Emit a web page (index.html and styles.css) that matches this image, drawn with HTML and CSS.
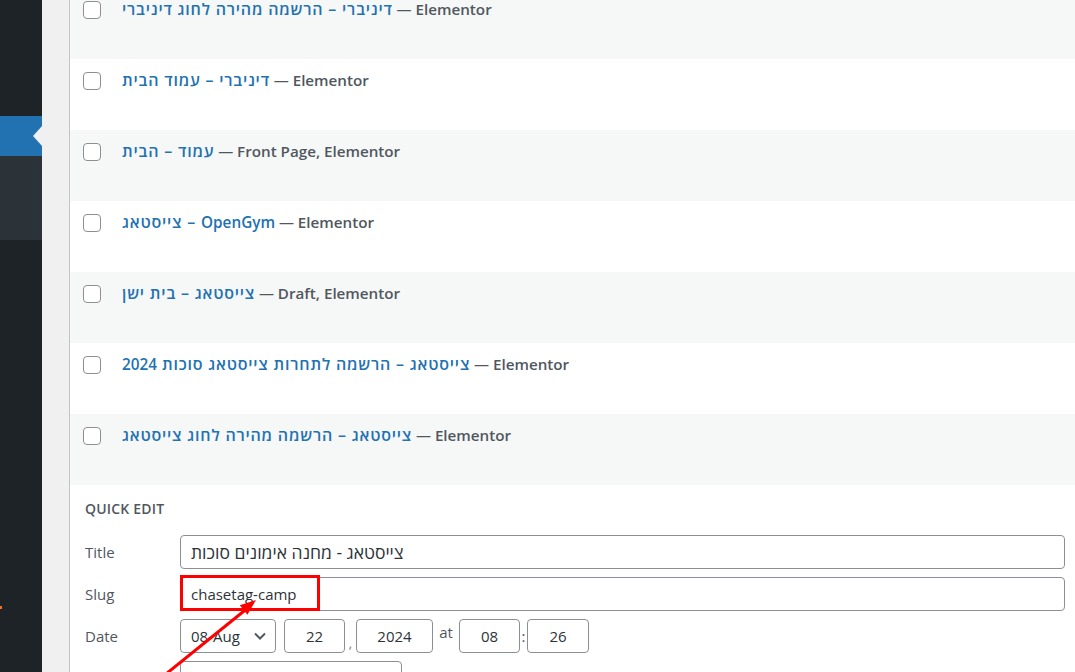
FILE: index.html
```html
<!DOCTYPE html>
<html lang="en">
<head>
  <meta charset="UTF-8">
  <title>Pages ‹ Quick Edit</title>
  <link rel="stylesheet" href="styles.css">
</head>
<body>
  <div class="admin">
    <aside class="sidebar">
      <div class="menu-top"></div>
      <div class="menu-current"></div>
      <div class="submenu"></div>
      <div class="menu-rest"><span class="update-dot"></span></div>
    </aside>

    <main class="content">
      <div class="list-table">
        <div class="row alt">
          <span class="check"></span>
          <strong class="row-title"><a href="#">דיניברי – הרשמה מהירה לחוג דיניברי</a> — <span class="state">Elementor</span></strong>
        </div>
        <div class="row">
          <span class="check"></span>
          <strong class="row-title"><a href="#">דיניברי – עמוד הבית</a> — <span class="state">Elementor</span></strong>
        </div>
        <div class="row alt">
          <span class="check"></span>
          <strong class="row-title"><a href="#">עמוד – הבית</a> — <span class="state">Front Page, Elementor</span></strong>
        </div>
        <div class="row">
          <span class="check"></span>
          <strong class="row-title"><a href="#">צייסטאג – <span class="latin">OpenGym</span></a> — <span class="state">Elementor</span></strong>
        </div>
        <div class="row alt">
          <span class="check"></span>
          <strong class="row-title"><a href="#">צייסטאג – בית ישן</a> — <span class="state">Draft, Elementor</span></strong>
        </div>
        <div class="row">
          <span class="check"></span>
          <strong class="row-title"><a href="#">צייסטאג – הרשמה לתחרות צייסטאג סוכות <span class="latin">2024</span></a> — <span class="state">Elementor</span></strong>
        </div>
        <div class="row alt">
          <span class="check"></span>
          <strong class="row-title"><a href="#">צייסטאג – הרשמה מהירה לחוג צייסטאג</a> — <span class="state">Elementor</span></strong>
        </div>

        <div class="quick-edit">
          <div class="legend">Quick Edit</div>

          <div class="field">
            <label>Title</label>
            <div class="input wide"><span class="he">צייסטאג - מחנה אימונים סוכות</span></div>
          </div>

          <div class="field">
            <label>Slug</label>
            <div class="slug-wrap">
              <div class="input wide">chasetag-camp</div>
              <span class="highlight-box"></span>
            </div>
          </div>

          <div class="field">
            <label>Date</label>
            <div class="date-line">
              <div class="input month">08-Aug
                <svg width="12" height="8" viewBox="0 0 12 8"><path d="M1 1.5 L6 6.5 L11 1.5" fill="none" stroke="#50575e" stroke-width="2"/></svg>
              </div>
              <div class="input num day">22</div>
              <span class="sep">,</span>
              <div class="input num year">2024</div>
              <span class="at">at</span>
              <div class="input num hour">08</div>
              <span class="sep colon">:</span>
              <div class="input num minute">26</div>
            </div>
          </div>

          <div class="field">
            <label>Password</label>
            <div class="input pass"></div>
          </div>
        </div>
      </div>
    </main>
  </div>

  <svg class="annotation" width="1075" height="672" viewBox="0 0 1075 672">
    <line x1="161" y1="678" x2="249" y2="607" stroke="#ff0000" stroke-width="3"/>
    <polygon points="256,600 239.8,605.3 247.4,614.7" fill="#ff0000"/>
  </svg>
</body>
</html>
```

FILE: styles.css
```css
html, body { margin: 0; height: 672px; overflow: hidden; }
body { font-family: "Open Sans", "Noto Sans", "DejaVu Sans", sans-serif; background-color: #f0f0f1; color: #3c434a; position: relative; }

.admin { display: flex; height: 672px; }

.sidebar { width: 42px; flex-shrink: 0; background-color: #1d2327; display: flex; flex-direction: column; }
.menu-top { height: 116px; }
.menu-current { height: 40px; background-color: #2271b1; position: relative; }
.menu-current::after { content: ""; position: absolute; right: 0; top: 10px; border-top: 10px solid transparent; border-bottom: 10px solid transparent; border-right: 9px solid #f0f0f1; }
.submenu { height: 84px; background-color: #2c3338; }
.menu-rest { flex: 1; position: relative; }
.update-dot { position: absolute; left: 0; top: 366px; width: 2px; height: 3px; background-color: #f56e28; }

.content { flex: 1; padding-left: 27px; min-width: 0; }
.list-table { margin-top: -12px; border-left: 1px solid #c3c4c7; background-color: #fff; }

.row { height: 71px; display: flex; align-items: flex-start; background-color: #fff; }
.row.alt { background-color: #f6f7f7; }
.check { width: 18px; height: 18px; box-sizing: border-box; border: 1px solid #8c8f94; border-radius: 4px; background-color: #fff; margin: 13px 21px 0 13px; flex-shrink: 0; }
.row-title { font-size: 15px; font-weight: 600; line-height: 20px; padding-top: 11px; color: #50575e; white-space: nowrap; }
.row-title a { color: #2271b1; text-decoration: none; font-size: 16px; letter-spacing: 0.8px; }
.row-title a .latin { font-size: 15.3px; letter-spacing: 0; }
.row-title .state { color: #50575e; font-size: 15.2px; }

.quick-edit { padding: 14px 10px 0 15px; background-color: #fff; }
.legend { font-size: 14px; font-weight: 600; line-height: 20px; text-transform: uppercase; color: #50575e; margin-bottom: 16px; letter-spacing: 0.2px; }
.field { display: flex; align-items: center; height: 34px; margin-bottom: 8px; }
.field label { width: 95px; flex-shrink: 0; font-size: 15px; color: #50575e; }

.input { height: 34px; box-sizing: border-box; border: 1px solid #8c8f94; border-radius: 4px; background-color: #fff; font-size: 15px; color: #2c3338; line-height: 32px; padding: 0 10px; white-space: nowrap; }
.input .he { font-size: 17.5px; }
.input.wide { flex: 1; }
.slug-wrap { flex: 1; position: relative; display: flex; }
.highlight-box { position: absolute; left: 0; top: -2px; width: 140px; height: 36px; box-sizing: border-box; border: 3px solid #ff0000; }

.date-line { display: flex; align-items: center; }
.input.month { width: 96px; display: flex; align-items: center; justify-content: space-between; padding-right: 9px; }
.input.num { text-align: center; padding: 0; }
.input.day { width: 61px; margin-left: 8px; }
.input.year { width: 77px; }
.input.hour { width: 61px; }
.input.minute { width: 62px; }
.sep { width: 11px; text-align: center; color: #8c8f94; font-size: 15px; align-self: flex-end; line-height: 22px; }
.sep.colon { width: 7px; align-self: center; color: #50575e; }
.at { width: 26px; text-align: center; font-size: 15px; color: #50575e; align-self: flex-start; line-height: 26px; }
.input.pass { width: 222px; }

.annotation { position: absolute; left: 0; top: 0; pointer-events: none; }
```
